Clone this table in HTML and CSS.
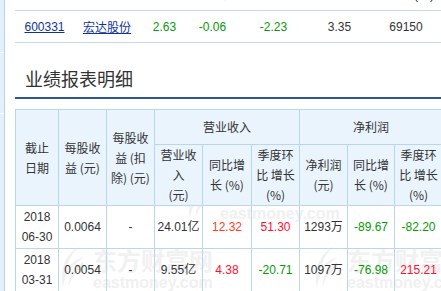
FILE: index.html
```html
<!DOCTYPE html>
<html lang="zh-CN">
<head>
<meta charset="utf-8">
<title>业绩报表明细</title>
<link rel="stylesheet" href="styles.css">
</head>
<body>
<div class="page">
  <aside class="side">
    <div class="side-seg seg1"></div>
    <div class="side-seg seg2"></div>
  </aside>
  <main class="main">
    <table class="quote">
      <colgroup>
        <col class="q1"><col class="q2"><col class="q3"><col class="q4"><col class="q5"><col class="q6"><col class="q7">
      </colgroup>
      <thead>
        <tr>
          <th>代码名</th><th>名称</th><th>最新价</th><th>涨跌额</th><th>涨跌幅<span class="arr">▾</span></th><th>换手率<span class="arr">▾</span></th><th>成交量(手)</th>
        </tr>
      </thead>
      <tbody>
        <tr>
          <td><a href="#">600331</a></td>
          <td><a href="#">宏达股份</a></td>
          <td class="green">2.63</td>
          <td class="green">-0.06</td>
          <td class="green">-2.23</td>
          <td>3.35</td>
          <td>69150</td>
        </tr>
      </tbody>
    </table>

    <h2 class="title">业绩报表明细</h2>
    <div class="bar"></div>

    <div class="report-wrap">
      <div class="wm-layer" aria-hidden="true">
        <div class="wm wm-a">
          <svg class="wm-logo" viewBox="0 0 28 44"><path d="M23 1C9 9 1 24 5 43C8 31 14 21 27 13C18 15 12 20 9 27C10 17 15 8 23 1Z"/><path d="M26 18C17 22 11 31 11 43C14 34 19 27 27 24Z"/></svg>
          <div class="wm-text"><span class="wm-cn">东方财富网</span><span class="wm-en">eastmoney.com</span></div>
        </div>
        <div class="wm wm-b">
          <svg class="wm-logo" viewBox="0 0 28 44"><path d="M23 1C9 9 1 24 5 43C8 31 14 21 27 13C18 15 12 20 9 27C10 17 15 8 23 1Z"/><path d="M26 18C17 22 11 31 11 43C14 34 19 27 27 24Z"/></svg>
          <div class="wm-text"><span class="wm-cn">东方财富网</span><span class="wm-en">eastmoney.com</span></div>
        </div>
        <div class="wm wm-c">
          <svg class="wm-logo" viewBox="0 0 28 44"><path d="M23 1C9 9 1 24 5 43C8 31 14 21 27 13C18 15 12 20 9 27C10 17 15 8 23 1Z"/><path d="M26 18C17 22 11 31 11 43C14 34 19 27 27 24Z"/></svg>
          <div class="wm-text"><span class="wm-cn">东方财富网</span><span class="wm-en">eastmoney.com</span></div>
        </div>
      </div>

      <table class="report">
        <colgroup>
          <col class="c-date"><col class="c-n"><col class="c-n"><col class="c-n"><col class="c-w"><col class="c-n"><col class="c-n"><col class="c-s"><col class="c-n">
        </colgroup>
        <thead>
          <tr>
            <th rowspan="2">截止<br>日期</th>
            <th rowspan="2">每股收<br>益 (元)</th>
            <th rowspan="2">每股收<br>益 (扣<br>除) (元)</th>
            <th colspan="3" class="grp">营业收入</th>
            <th colspan="3" class="grp">净利润</th>
          </tr>
          <tr>
            <th>营业收<br>入<br>(元)</th>
            <th>同比增<br>长 (%)</th>
            <th>季度环<br>比 增长<br>(%)</th>
            <th>净利润<br>(元)</th>
            <th>同比增<br>长 (%)</th>
            <th>季度环<br>比 增长<br>(%)</th>
          </tr>
        </thead>
        <tbody>
          <tr>
            <td>2018<br>06-30</td>
            <td>0.0064</td>
            <td>-</td>
            <td>24.01亿</td>
            <td class="red1">12.32</td>
            <td class="red">51.30</td>
            <td>1293万</td>
            <td class="green">-89.67</td>
            <td class="green">-82.20</td>
          </tr>
          <tr>
            <td>2018<br>03-31</td>
            <td>0.0054</td>
            <td>-</td>
            <td>9.55亿</td>
            <td class="red">4.38</td>
            <td class="green">-20.71</td>
            <td>1097万</td>
            <td class="green">-76.98</td>
            <td class="red">215.21</td>
          </tr>
        </tbody>
      </table>
    </div>
  </main>
</div>
</body>
</html>
```

FILE: styles.css
```css
html, body {
  margin: 0;
  padding: 0;
  overflow: hidden;
  background: #fff;
}
body {
  font-family: "Liberation Sans", Arial, "Noto Sans CJK SC", sans-serif;
  font-size: 12px;
  color: #333;
}
.page {
  display: flex;
  width: 470px;
  height: 291px;
  overflow: hidden;
}
.side {
  flex: none;
  width: 4px;
  background: #e3effa;
  border-right: 1px solid #b7d2eb;
  display: flex;
  flex-direction: column;
}
.side-seg { border-bottom: 1px solid #fbfdff; }
.seg1 { height: 52px; }
.seg2 { height: 60px; }

.main {
  flex: none;
  width: 455px;
  padding-left: 10px;
}

/* quote table */
.quote {
  border-collapse: collapse;
  table-layout: fixed;
  width: 429px;
  margin-top: -17px;
}
.q1 { width: 59px; }
.q2 { width: 66px; }
.q3 { width: 49px; }
.q4 { width: 47px; }
.q5 { width: 75px; }
.q6 { width: 57px; }
.q7 { width: 76px; }
.quote th {
  height: 21px;
  padding: 0 0 6px;
  font-weight: normal;
  color: #333;
  white-space: nowrap;
  border-bottom: 1px solid #c3d9ee;
}
.quote .arr { color: #f0a040; font-size: 10px; }
.quote td {
  height: 31px;
  padding: 0;
  text-align: center;
  border-bottom: 1px solid #c3d9ee;
  color: #333;
}
.quote a { color: #10339b; text-decoration: underline; }

.green { color: #079a07 !important; }
.red { color: #ff1030 !important; }
.red1 { color: #ff4020 !important; }

.title {
  margin: 23px 0 7px;
  padding-left: 10px;
  font-size: 18px;
  line-height: 24px;
  font-weight: normal;
  color: #333;
  font-family: "Noto Sans CJK SC", sans-serif;
}
.bar {
  height: 2px;
  background: #2f5593;
  margin-bottom: 10px;
}

/* report table */
.report-wrap {
  position: relative;
  width: 427px;
}
.wm-layer {
  position: absolute;
  left: 0;
  top: 0;
  width: 440px;
  height: 200px;
  overflow: visible;
  z-index: 0;
  pointer-events: none;
}
.wm {
  position: absolute;
  display: flex;
  gap: 8px;
  align-items: flex-start;
}
.wm-a { left: 43px; top: 135px; }
.wm-b { left: 297px; top: 135px; }
.wm-c { left: 170px; top: 66px; }
.wm-logo { width: 27px; height: 44px; fill: #f1f1f1; flex: none; }
.wm-text { display: flex; flex-direction: column; }
.wm-cn {
  font-family: "Noto Sans CJK SC", sans-serif;
  font-weight: bold;
  font-size: 24px;
  line-height: 32px;
  color: #f1f1f1;
  white-space: nowrap;
}
.wm-en {
  font-family: "Liberation Sans", Arial, sans-serif;
  font-weight: bold;
  font-size: 16px;
  line-height: 14px;
  color: #f0f0f0;
  white-space: nowrap;
}

.report {
  position: relative;
  z-index: 1;
  border-collapse: collapse;
  table-layout: fixed;
  width: 427px;
}
.c-date { width: 43px; }
.c-n { width: 48px; }
.c-w { width: 49px; }
.c-s { width: 47px; }
.report th {
  background: #eaf4fd;
  border: 1px solid #bad5ee;
  font-weight: normal;
  line-height: 20px;
  padding: 0 2px;
  color: #333;
  text-align: center;
  vertical-align: middle;
  font-family: "Noto Sans CJK SC", sans-serif;
}
.report th.grp { padding: 7px 2px; }
.report td {
  border: 1px solid #bad5ee;
  line-height: 20px;
  padding: 1px 1px;
  text-align: center;
  vertical-align: middle;
  color: #333;
  white-space: nowrap;
}
```
